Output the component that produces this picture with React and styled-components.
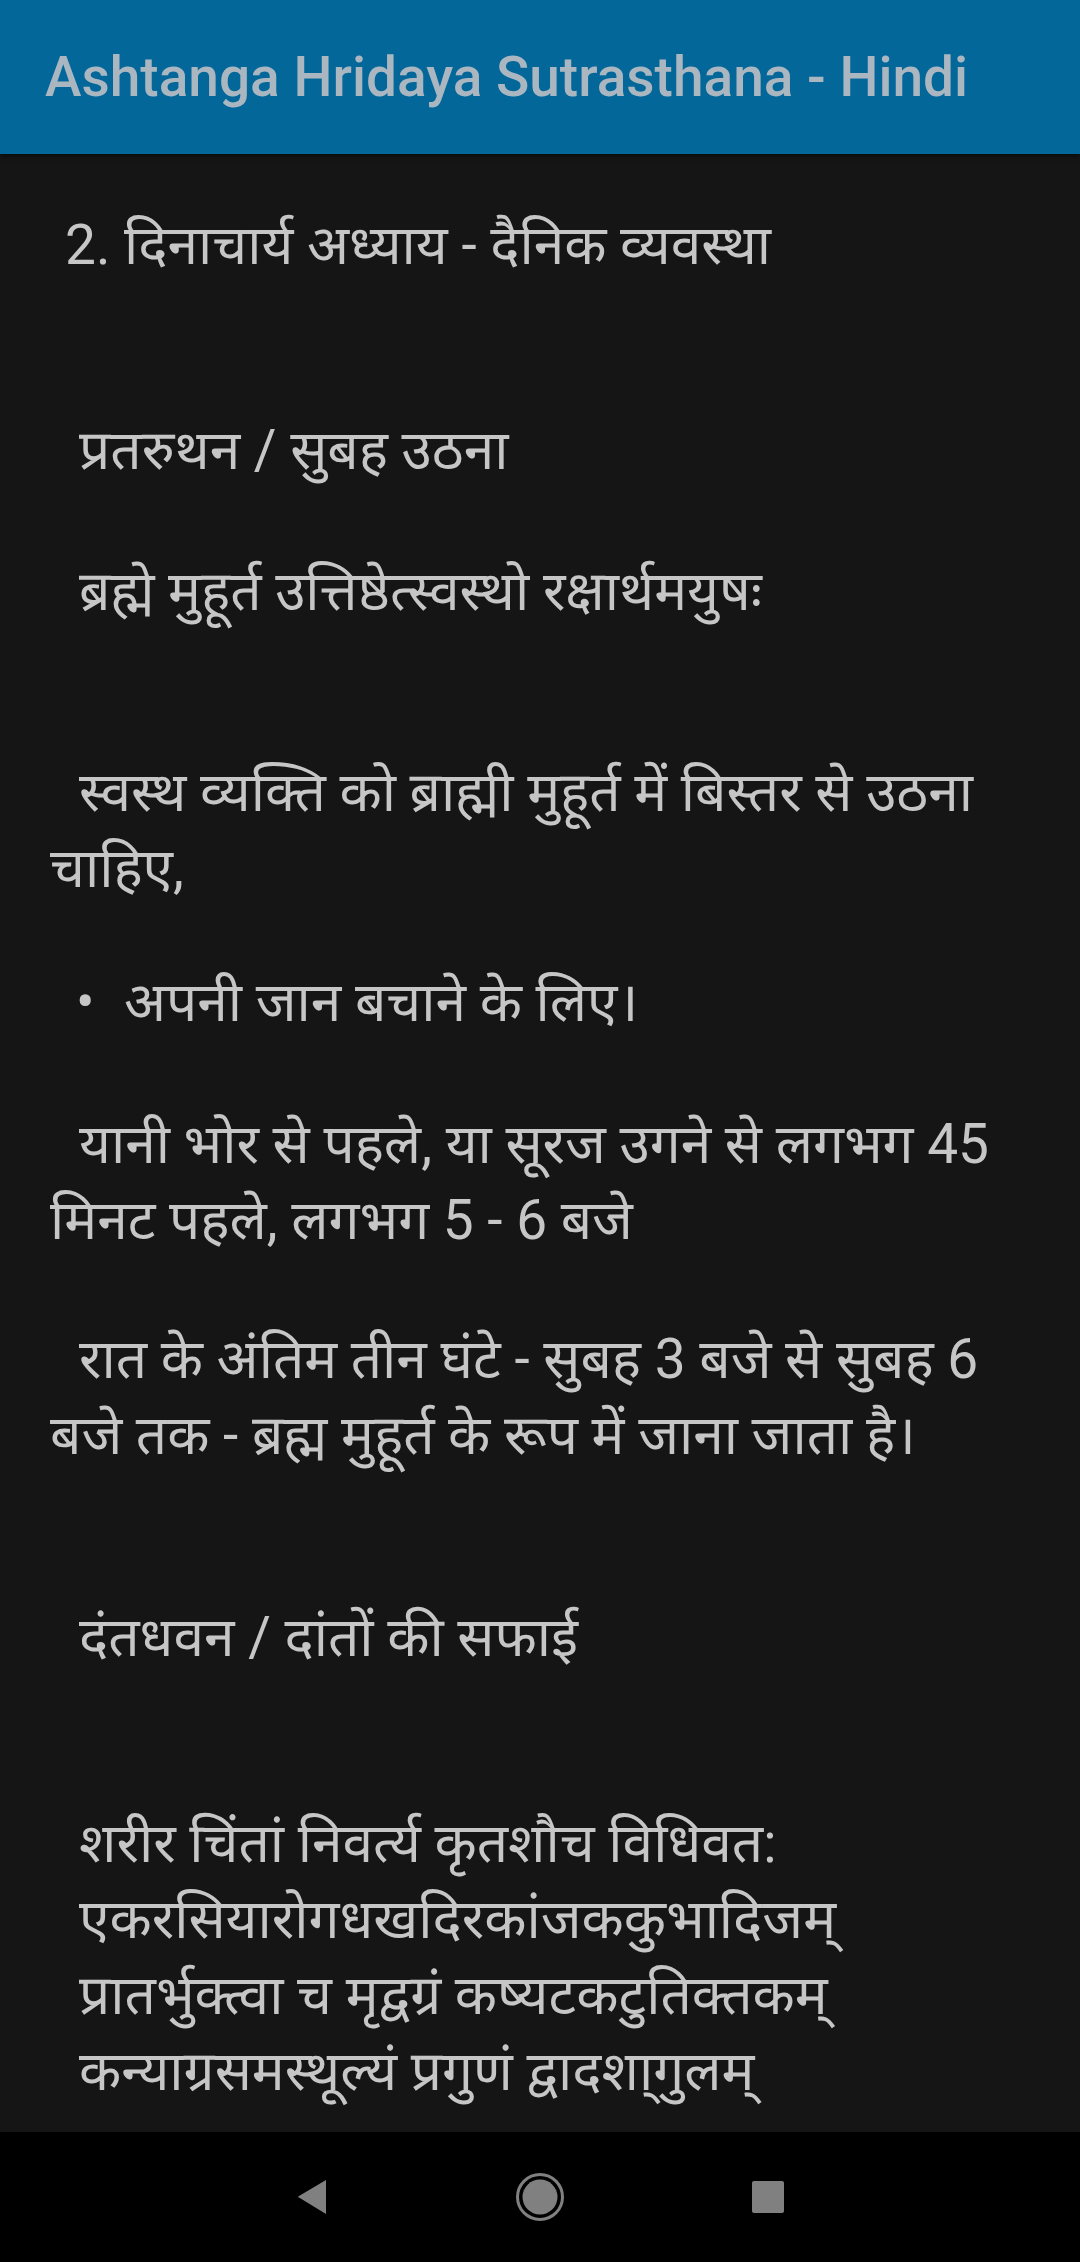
import React from 'react';
import styled, { createGlobalStyle } from 'styled-components';

const GlobalStyle = createGlobalStyle`
  html, body {
    margin: 0;
    padding: 0;
    background: #151515;
  }
  * {
    box-sizing: border-box;
  }
`;

const Screen = styled.div`
  width: 1080px;
  height: 2262px;
  display: flex;
  flex-direction: column;
  background: #151515;
  font-family: Roboto, "Noto Sans Devanagari", "Noto Sans", sans-serif;
`;

const AppBar = styled.header`
  height: 154px;
  flex-shrink: 0;
  display: flex;
  align-items: center;
  padding-left: 45px;
  background: #03679a;
  box-shadow: 0 2px 4px rgba(0, 0, 0, 0.5);
  z-index: 1;
`;

const Title = styled.h1`
  margin: 0;
  font-size: 55px;
  font-weight: 500;
  color: #aab6c0;
  letter-spacing: 0;
`;

const Content = styled.main`
  flex: 1;
  overflow: hidden;
  padding: 53px 50px 0;
`;

const Line = styled.p`
  margin: ${(p) => p.$gap || 0}px 0 0;
  font-size: 55px;
  line-height: 76px;
  color: #c6c6c6;
  text-indent: ${(p) => p.$indent ?? 29}px;
`;

const Bullet = styled.span`
  display: inline-block;
  width: 48px;
  text-indent: 0;
`;

const NavBar = styled.nav`
  height: 130px;
  flex-shrink: 0;
  background: #000;
  display: flex;
  align-items: center;
  justify-content: center;
  gap: 178px;
`;

const NavButton = styled.div`
  width: 50px;
  height: 50px;
  display: flex;
  align-items: center;
  justify-content: center;
`;

const BackIcon = () => (
  <svg width="32" height="36" viewBox="0 0 32 36">
    <path d="M30 1 L30 35 L3 18.5 Q1 18 3 17 Z" fill="#808080" />
  </svg>
);

const HomeIcon = () => (
  <svg width="50" height="50" viewBox="0 0 50 50">
    <circle cx="25" cy="25" r="22.5" fill="none" stroke="#808080" strokeWidth="3" />
    <circle cx="25" cy="25" r="17.5" fill="#808080" />
  </svg>
);

const RecentsIcon = () => (
  <svg width="32" height="32" viewBox="0 0 32 32">
    <rect x="0" y="0" width="32" height="32" rx="2" fill="#808080" />
  </svg>
);

const blocks = [
  { text: '2. दिनाचार्य अध्याय - दैनिक व्यवस्था', indent: 15, gap: 0 },
  { text: 'प्रतरुथन / सुबह उठना', gap: 129 },
  { text: 'ब्रह्मे मुहूर्त उत्तिष्ठेत्स्वस्थो रक्षार्थमयुषः', gap: 65 },
  { text: 'स्वस्थ व्यक्ति को ब्राह्मी मुहूर्त में बिस्तर से उठना चाहिए,', gap: 125 },
  { text: 'अपनी जान बचाने के लिए।', bullet: true, indent: 26, gap: 58 },
  { text: 'यानी भोर से पहले, या सूरज उगने से लगभग 45 मिनट पहले, लगभग 5 - 6 बजे', gap: 66 },
  { text: 'रात के अंतिम तीन घंटे - सुबह 3 बजे से सुबह 6 बजे तक - ब्रह्म मुहूर्त के रूप में जाना जाता है।', gap: 63 },
  { text: 'दंतधवन / दांतों की सफाई', gap: 126 },
  { text: 'शरीर चिंतां निवर्त्य कृतशौच विधिवत:', gap: 130 },
  { text: 'एकरसियारोगधखदिरकांजककुभादिजम्', gap: 0 },
  { text: 'प्रातर्भुक्त्वा च मृद्वग्रं कष्यटकटुतिक्तकम्', gap: 0 },
  { text: 'कन्याग्रसमस्थूल्यं प्रगुणं द्वादशा्गुलम्', gap: 0 },
];

export default function App() {
  return (
    <>
      <GlobalStyle />
      <Screen>
        <AppBar>
          <Title>Ashtanga Hridaya Sutrasthana - Hindi</Title>
        </AppBar>
        <Content>
          {blocks.map((b, i) => (
            <Line key={i} $gap={b.gap} $indent={b.indent}>
              {b.bullet && <Bullet>•</Bullet>}
              {b.text}
            </Line>
          ))}
        </Content>
        <NavBar>
          <NavButton><BackIcon /></NavButton>
          <NavButton><HomeIcon /></NavButton>
          <NavButton><RecentsIcon /></NavButton>
        </NavBar>
      </Screen>
    </>
  );
}
